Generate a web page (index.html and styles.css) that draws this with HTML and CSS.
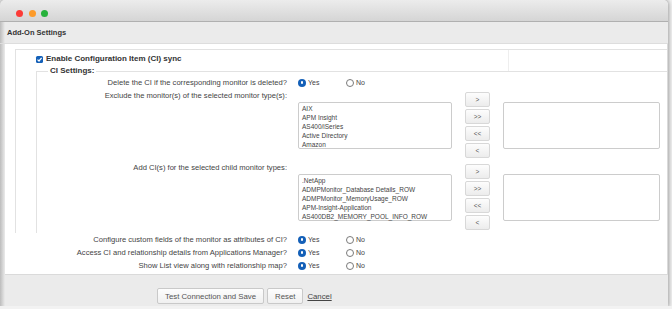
FILE: index.html
```html
<!DOCTYPE html>
<html>
<head>
  <title>Add-On Settings</title>
  <link rel="stylesheet" href="styles.css">
</head>
<body>
  <div class="window">
    <div class="titlebar">
      <span class="light red"></span>
      <span class="light amber"></span>
      <span class="light green"></span>
    </div>
    <div class="page-head">Add-On Settings</div>

    <div class="panel">
      <div class="sync-box">
        <div class="sync-row">
          <div class="sync-cell">
            <label class="check">
              <span class="checkbox">
                <svg width="7" height="7" viewBox="0 0 7 7"><path d="M1.5 3.6 L3 5 L5.6 1.8" fill="none" stroke="#fff" stroke-width="1.2"/></svg>
              </span>
              Enable Configuration Item (CI) sync
            </label>
          </div>
          <div class="sync-side"></div>
        </div>

        <fieldset class="ci-set">
          <legend>CI Settings:</legend>

          <div class="opt-row">
            <span class="opt-label">Delete the CI if the corresponding monitor is deleted?</span>
            <div class="choices">
              <span class="choice"><span class="radio on"></span>Yes</span>
              <span class="choice"><span class="radio"></span>No</span>
            </div>
          </div>

          <div class="list-row">
            <span class="opt-label">Exclude the monitor(s) of the selected monitor type(s):</span>
            <div class="picker">
              <div class="listbox">
                <div>AIX</div>
                <div>APM Insight</div>
                <div>AS400/iSeries</div>
                <div>Active Directory</div>
                <div>Amazon</div>
              </div>
              <div class="movers">
                <button class="mover">&gt;</button>
                <button class="mover">&gt;&gt;</button>
                <button class="mover">&lt;&lt;</button>
                <button class="mover">&lt;</button>
              </div>
              <div class="listbox wide"></div>
            </div>
          </div>

          <div class="list-row">
            <span class="opt-label">Add CI(s) for the selected child monitor types:</span>
            <div class="picker">
              <div class="listbox">
                <div>.NetApp</div>
                <div>ADMPMonitor_Database Details_ROW</div>
                <div>ADMPMonitor_MemoryUsage_ROW</div>
                <div>APM-Insight-Application</div>
                <div>AS400DB2_MEMORY_POOL_INFO_ROW</div>
              </div>
              <div class="movers">
                <button class="mover">&gt;</button>
                <button class="mover">&gt;&gt;</button>
                <button class="mover">&lt;&lt;</button>
                <button class="mover">&lt;</button>
              </div>
              <div class="listbox wide"></div>
            </div>
          </div>
        </fieldset>
      </div>

      <div class="opt-row outer">
        <span class="opt-label">Configure custom fields of the monitor as attributes of CI?</span>
        <div class="choices">
          <span class="choice"><span class="radio on"></span>Yes</span>
          <span class="choice"><span class="radio"></span>No</span>
        </div>
      </div>
      <div class="opt-row outer">
        <span class="opt-label">Access CI and relationship details from Applications Manager?</span>
        <div class="choices">
          <span class="choice"><span class="radio on"></span>Yes</span>
          <span class="choice"><span class="radio"></span>No</span>
        </div>
      </div>
      <div class="opt-row outer">
        <span class="opt-label">Show List view along with relationship map?</span>
        <div class="choices">
          <span class="choice"><span class="radio on"></span>Yes</span>
          <span class="choice"><span class="radio"></span>No</span>
        </div>
      </div>
    </div>

    <div class="footer">
      <button class="btn">Test Connection and Save</button>
      <button class="btn">Reset</button>
      <a class="cancel" href="#">Cancel</a>
    </div>
  </div>
</body>
</html>
```

FILE: styles.css
```css
body {
  margin: 0;
  background-color: #f2f2f2;
  font-family: "Liberation Sans", Arial, sans-serif;
  color: #444444;
}

.window {
  width: 668px;
  height: 306px;
  overflow: hidden;
  border-radius: 5px 5px 0 0;
  background: linear-gradient(to right, #bcbcbc 0, #ebebeb 5px, #ebebeb 100%);
  box-shadow: 0 0 4px 1px rgba(0, 0, 0, 0.35);
}

.titlebar {
  height: 22px;
  display: flex;
  gap: 5.5px;
  padding: 10px 0 0 16px;
  box-sizing: border-box;
  background: linear-gradient(#ececec, #d5d5d5);
  border-bottom: 1px solid #b0b0b0;
}

.light {
  width: 7px;
  height: 7px;
  border-radius: 50%;
}
.red { background-color: #fc3b37; }
.amber { background-color: #fd9b2a; }
.green { background-color: #27b23c; }

.page-head {
  height: 22px;
  line-height: 22px;
  padding-left: 7px;
  box-sizing: border-box;
  border-bottom: 1px solid #dddddd;
  font-size: 7.5px;
  font-weight: bold;
  color: #333333;
}

.panel {
  margin-left: 5px;
  height: 231px;
  box-sizing: border-box;
  padding-top: 5px;
  background-color: #ffffff;
  border-right: 1px solid #dadada;
  border-bottom: 1px solid #dadada;
}

.sync-box {
  margin-left: 10px;
  border-top: 1px solid #e2e2e2;
  border-left: 1px solid #e2e2e2;
}

.sync-row {
  display: flex;
  height: 21px;
}

.sync-cell {
  width: 492px;
  border-right: 1px solid #eeeeee;
}

.check {
  display: flex;
  align-items: center;
  gap: 3px;
  margin: 4px 0 0 20px;
  line-height: 10px;
  font-size: 8px;
  font-weight: bold;
  color: #333333;
}

.checkbox {
  width: 7px;
  height: 7px;
  border-radius: 1.5px;
  background-color: #1460b8;
  display: flex;
}

.ci-set {
  margin: -5px 0 0 20px;
  padding: 0;
  border: none;
  border-top: 1px solid #e2e2e2;
  border-left: 1px solid #e2e2e2;
}

.ci-set legend {
  margin-left: 11px;
  padding: 0 2px;
  line-height: 10px;
  font-size: 8px;
  font-weight: bold;
  color: #333333;
}

.opt-row {
  display: grid;
  grid-template-columns: 250px auto;
  column-gap: 11px;
  height: 13px;
  align-items: center;
}

.opt-row.outer {
  grid-template-columns: 282px auto;
}

.opt-label {
  text-align: right;
  font-size: 7.6px;
  line-height: 13px;
  color: #444444;
}

.choices {
  display: flex;
}

.choice {
  width: 48px;
  display: flex;
  align-items: center;
  gap: 2px;
  font-size: 7px;
  color: #444444;
}

.radio {
  width: 8px;
  height: 8px;
  box-sizing: border-box;
  border-radius: 50%;
  border: 1px solid #7a7a7a;
  background-color: #ffffff;
  display: flex;
  align-items: center;
  justify-content: center;
}

.radio.on {
  border: none;
  background-color: #1460b8;
}

.radio.on::after {
  content: "";
  width: 2.5px;
  height: 2.5px;
  border-radius: 50%;
  background-color: #ffffff;
}

.list-row {
  display: grid;
  grid-template-columns: 250px auto;
  column-gap: 11px;
  align-items: start;
  padding: 3px 0;
}

.list-row .opt-label {
  margin-top: -3px;
}

.picker {
  display: flex;
  align-items: center;
  gap: 13px;
}

.listbox {
  width: 154px;
  height: 47px;
  box-sizing: border-box;
  padding: 1px 3px;
  border: 1px solid #cccccc;
  border-radius: 2px;
  font-size: 6.5px;
  line-height: 9px;
  color: #444444;
  white-space: nowrap;
}

.listbox.wide {
  width: 157px;
}

.movers {
  display: flex;
  flex-direction: column;
  gap: 2px;
}

.mover {
  width: 25px;
  height: 15px;
  padding: 0;
  border: 1px solid #d8d8d8;
  border-radius: 2px;
  background: linear-gradient(#fdfdfd, #ececec);
  font-family: "Liberation Sans", Arial, sans-serif;
  font-size: 6.5px;
  color: #555555;
}

.footer {
  display: flex;
  align-items: center;
  gap: 3px;
  padding: 13px 0 0 157px;
}

.btn {
  height: 16px;
  padding: 0 7px;
  border: 1px solid #c9c9c9;
  border-radius: 2px;
  background: linear-gradient(#fdfdfd, #f0f0f0);
  font-family: "Liberation Sans", Arial, sans-serif;
  font-size: 7.8px;
  color: #555555;
}

.cancel {
  margin-left: 1px;
  font-size: 7.8px;
  color: #444444;
}
```
